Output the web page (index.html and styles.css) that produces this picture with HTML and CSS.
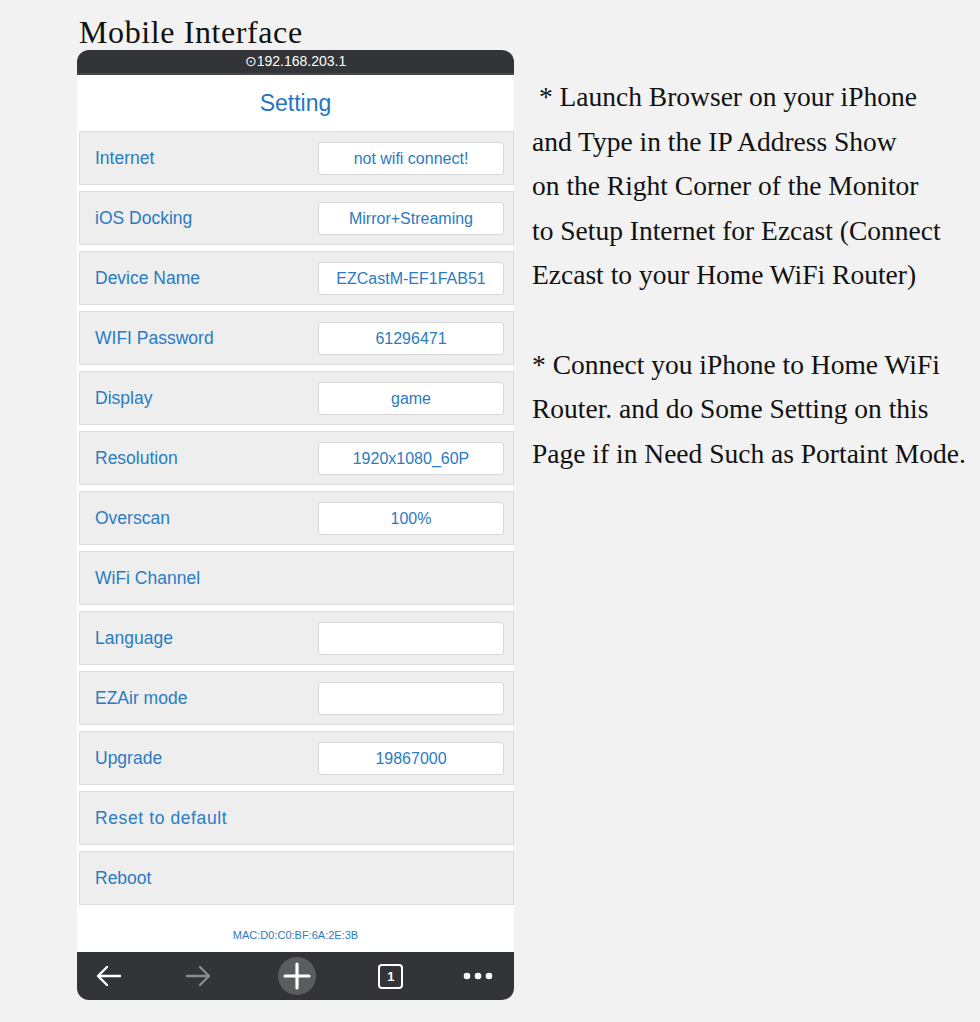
FILE: index.html
```html
<!DOCTYPE html>
<html lang="en">

<head>
  <meta charset="UTF-8">
  <title>Mobile Interface</title>
  <link rel="stylesheet" href="styles.css">
</head>

<body>
  <div class="page">
    <div class="left-col">
      <h1 class="title">Mobile Interface</h1>
      <div class="phone">
        <div class="top-bar">&#8857;192.168.203.1</div>
        <div class="phone-header">Setting</div>
        <ul class="settings">
          <li class="row"><span>Internet</span><div class="field">not wifi connect!</div></li>
          <li class="row"><span>iOS Docking</span><div class="field">Mirror+Streaming</div></li>
          <li class="row"><span>Device Name</span><div class="field">EZCastM-EF1FAB51</div></li>
          <li class="row"><span>WIFI Password</span><div class="field">61296471</div></li>
          <li class="row"><span>Display</span><div class="field">game</div></li>
          <li class="row"><span>Resolution</span><div class="field">1920x1080_60P</div></li>
          <li class="row"><span>Overscan</span><div class="field">100%</div></li>
          <li class="row"><span>WiFi Channel</span></li>
          <li class="row"><span>Language</span><div class="field"></div></li>
          <li class="row"><span>EZAir mode</span><div class="field"></div></li>
          <li class="row"><span>Upgrade</span><div class="field">19867000</div></li>
          <li class="row"><span class="wide">Reset to default</span></li>
          <li class="row"><span>Reboot</span></li>
        </ul>
        <div class="mac">MAC:D0:C0:BF:6A:2E:3B</div>
        <div class="bottom-bar">
          <svg class="icon" width="30" height="30" viewBox="0 0 30 30">
            <path d="M26 15H4M13 6L4 15l9 9" fill="none" stroke="#fff" stroke-width="2.4" stroke-linecap="round" stroke-linejoin="round"/>
          </svg>
          <svg class="icon" width="30" height="30" viewBox="0 0 30 30">
            <path d="M4 15h22M17 6l9 9-9 9" fill="none" stroke="#8a8b8e" stroke-width="2.4" stroke-linecap="round" stroke-linejoin="round"/>
          </svg>
          <div class="plus">
            <svg width="38" height="38" viewBox="0 0 38 38">
              <path d="M19 7v24M7 19h24" stroke="#fff" stroke-width="3.2" stroke-linecap="round"/>
            </svg>
          </div>
          <div class="tabs">1</div>
          <svg class="icon" width="32" height="30" viewBox="0 0 32 30">
            <circle cx="5" cy="15" r="3.3" fill="#fff"/>
            <circle cx="16" cy="15" r="3.3" fill="#fff"/>
            <circle cx="27" cy="15" r="3.3" fill="#fff"/>
          </svg>
        </div>
      </div>
    </div>

    <div class="notes">
      <p>&nbsp;* Launch Browser on your iPhone<br>and Type in the IP Address Show<br>on the Right Corner of the Monitor<br>to Setup Internet for Ezcast (Connect<br>Ezcast to your Home WiFi Router)</p>
      <p>* Connect you iPhone to Home WiFi<br>Router. and do Some Setting on this<br>Page if in Need Such as Portaint Mode.</p>
    </div>
  </div>
</body>

</html>
```

FILE: styles.css
```css
body {
  margin: 0;
  padding: 0;
  background-color: #f2f2f2;
  color: #111;
  font-family: "Liberation Serif", serif;
}

.page {
  display: flex;
  padding: 16px 0 0 77px;
}

.left-col {
  width: 437px;
}

.title {
  margin: 0 0 2px 2px;
  font-size: 32px;
  line-height: 32px;
  font-weight: normal;
  letter-spacing: 0.6px;
}

.phone {
  background-color: #fff;
  border-radius: 12px;
  overflow: hidden;
  font-family: "Liberation Sans", Arial, sans-serif;
  color: #2b7bc2;
}

.top-bar {
  height: 23px;
  background-color: #333437;
  border-bottom: 2px solid #45474b;
  color: #fff;
  font-size: 14px;
  line-height: 23px;
  text-align: center;
}

.phone-header {
  height: 56px;
  line-height: 56px;
  text-align: center;
  font-size: 23px;
  color: #1f76c6;
}

.settings {
  list-style: none;
  margin: 0;
  padding: 0;
}

.row {
  display: flex;
  align-items: center;
  justify-content: space-between;
  height: 52px;
  margin: 0 0 6px 2px;
  padding: 0 9px 0 15px;
  background-color: #eeeeee;
  border: 1px solid #dcdcdc;
  font-size: 17.5px;
}

.row:last-child {
  margin-bottom: 0;
}

.wide {
  letter-spacing: 0.6px;
}

.field {
  width: 184px;
  height: 31px;
  line-height: 31px;
  background-color: #fff;
  border: 1px solid #d8d8d8;
  border-radius: 3px;
  text-align: center;
  font-size: 16px;
}

.mac {
  height: 47px;
  line-height: 60px;
  text-align: center;
  font-size: 11px;
}

.bottom-bar {
  height: 48px;
  background-color: #333437;
  display: flex;
  align-items: center;
  justify-content: space-between;
  padding: 0 20px 0 17px;
}

.plus {
  width: 38px;
  height: 38px;
  margin-left: 6px;
  border-radius: 50%;
  background-color: #5b5c60;
}

.tabs {
  width: 21px;
  height: 21px;
  margin-left: 4px;
  border: 2.5px solid #fff;
  border-radius: 4px;
  color: #fff;
  font-size: 13px;
  font-weight: bold;
  line-height: 21px;
  text-align: center;
}

.notes {
  margin: 59px 0 0 18px;
  font-size: 27.5px;
  line-height: 44.5px;
}

.notes p {
  margin: 0 0 45px 0;
}
```
